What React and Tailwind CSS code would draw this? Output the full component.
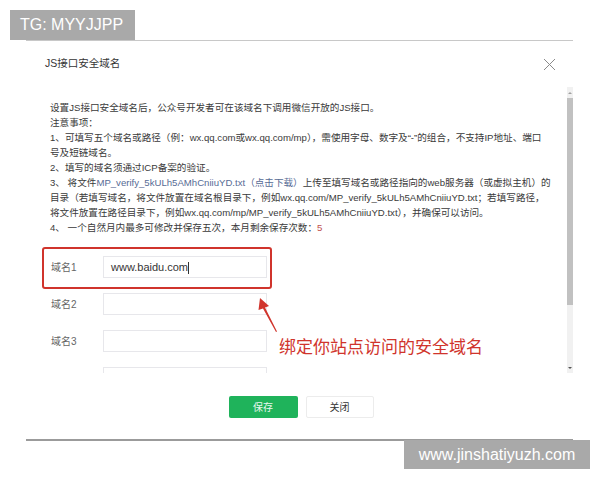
import React from 'react';

const cjk = { fontFamily: '"Liberation Sans", "Noto Sans CJK SC", sans-serif' };
const latin = { fontFamily: '"Liberation Sans", Arial, sans-serif' };

function Link({ children }) {
    return <span className="text-[#576b95]">{children}</span>;
}

function DomainRow({ label, value, children }) {
    return (
        <div className="relative flex h-[22px] items-center mb-[15px]">
            <span className="w-[52px] text-[10px] text-[#666]">{label}</span>
            <div className="h-[22px] w-[164px] border border-[#e7e7eb] bg-white px-[7px] text-[11px] leading-[20px] text-[#353535]">
                {value}
                {value ? <span className="inline-block h-[12px] w-px bg-[#333] align-middle" /> : null}
            </div>
            {children}
        </div>
    );
}

export default function App() {
    return (
        <div className="relative h-[480px] w-[600px] overflow-hidden bg-white" style={cjk}>
            <div className="pt-[40px]">
                <div className="ml-[26px] w-[547px] border-t border-[#c8c8c8] border-b-2 border-b-[#9b9b9b]">
                    {/* header */}
                    <div className="flex h-[46px] items-center justify-between pl-[19px] pr-[17px]">
                        <span className="text-[10.5px] text-[#353535]">JS接口安全域名</span>
                        <svg width="13" height="13" viewBox="0 0 13 13">
                            <path d="M1 1 L12 12 M12 1 L1 12" stroke="#8a8a8a" strokeWidth="1" fill="none" />
                        </svg>
                    </div>

                    {/* body */}
                    <div className="flex h-[286px]">
                        <div className="relative flex-1 overflow-hidden pl-[24px] pt-[13px]">
                            <div className="text-[9.6px] leading-[15px] text-[#3a3a3a] whitespace-nowrap">
                                <div>设置JS接口安全域名后，公众号开发者可在该域名下调用微信开放的JS接口。</div>
                                <div>注意事项：</div>
                                <div>1、可填写五个域名或路径（例：wx.qq.com或wx.qq.com/mp），需使用字母、数字及“-”的组合，不支持IP地址、端口</div>
                                <div>号及短链域名。</div>
                                <div>2、填写的域名须通过ICP备案的验证。</div>
                                <div>
                                    3、 将文件<Link>MP_verify_5kULh5AMhCniiuYD.txt（点击下载）</Link>上传至填写域名或路径指向的web服务器（或虚拟主机）的
                                </div>
                                <div>目录（若填写域名，将文件放置在域名根目录下，例如wx.qq.com/MP_verify_5kULh5AMhCniiuYD.txt；若填写路径，</div>
                                <div>将文件放置在路径目录下，例如wx.qq.com/mp/MP_verify_5kULh5AMhCniiuYD.txt），并确保可以访问。</div>
                                <div>
                                    4、 一个自然月内最多可修改并保存五次，本月剩余保存次数：<span className="text-[#c0504d]">5</span>
                                </div>
                            </div>

                            <div className="mt-[21px] pl-[1px]">
                                <DomainRow label="域名1" value="www.baidu.com">
                                    <div className="absolute -left-[9px] -top-[9px] h-[42px] w-[230px] rounded-[3px] border-2 border-[#d0342c]" />
                                </DomainRow>
                                <DomainRow label="域名2" value="" />
                                <DomainRow label="域名3" value="" />
                                <DomainRow label="" value="" />
                            </div>

                            {/* annotation */}
                            <svg className="absolute left-[228px] top-[208px]" width="30" height="40" viewBox="0 0 30 40">
                                <path d="M6 3 L4.5 15 L9 13.5 L22 37 L23 36.5 L11 12.5 L15 11 Z" fill="#d0342c" />
                            </svg>
                            <div className="absolute left-[253px] top-[250px] text-[17px] leading-[22px] text-[#d0342c]">
                                绑定你站点访问的安全域名
                            </div>
                        </div>

                        {/* scrollbar */}
                        <div className="flex w-[6px] flex-col items-center bg-[#f1f1f1]">
                            <div className="flex h-[11px] items-center">
                                <div className="h-0 w-0 border-x-[2px] border-b-[2px] border-x-transparent border-b-[#a0a0a0]" />
                            </div>
                            <div className="h-[207px] w-full bg-[#c1c1c1]" />
                            <div className="flex-1" />
                            <div className="flex h-[11px] items-center">
                                <div className="h-0 w-0 border-x-[2px] border-t-[2px] border-x-transparent border-t-[#555]" />
                            </div>
                        </div>
                    </div>

                    {/* footer */}
                    <div className="flex justify-center gap-[8px] pt-[23px] pb-[21px] pl-[3px]">
                        <button className="h-[22px] w-[69px] rounded-[2px] bg-[#1fb35b] text-[10px] text-[#e8f7ee]">保存</button>
                        <button className="h-[22px] w-[68px] rounded-[2px] border border-[#ececec] bg-white text-[10px] text-[#353535]">关闭</button>
                    </div>
                </div>
            </div>

            {/* watermarks */}
            <div
                className="absolute left-[10px] top-[10px] flex h-[30px] w-[125px] items-center bg-[#a9a9a9] pl-[10px] text-[16px] text-white"
                style={latin}
            >
                TG: MYYJJPP
            </div>
            <div
                className="absolute left-[404px] top-[440px] flex h-[29px] w-[186px] items-center justify-center bg-[#a9a9a9] text-[16px] text-white"
                style={latin}
            >
                www.jinshatiyuzh.com
            </div>
        </div>
    );
}
